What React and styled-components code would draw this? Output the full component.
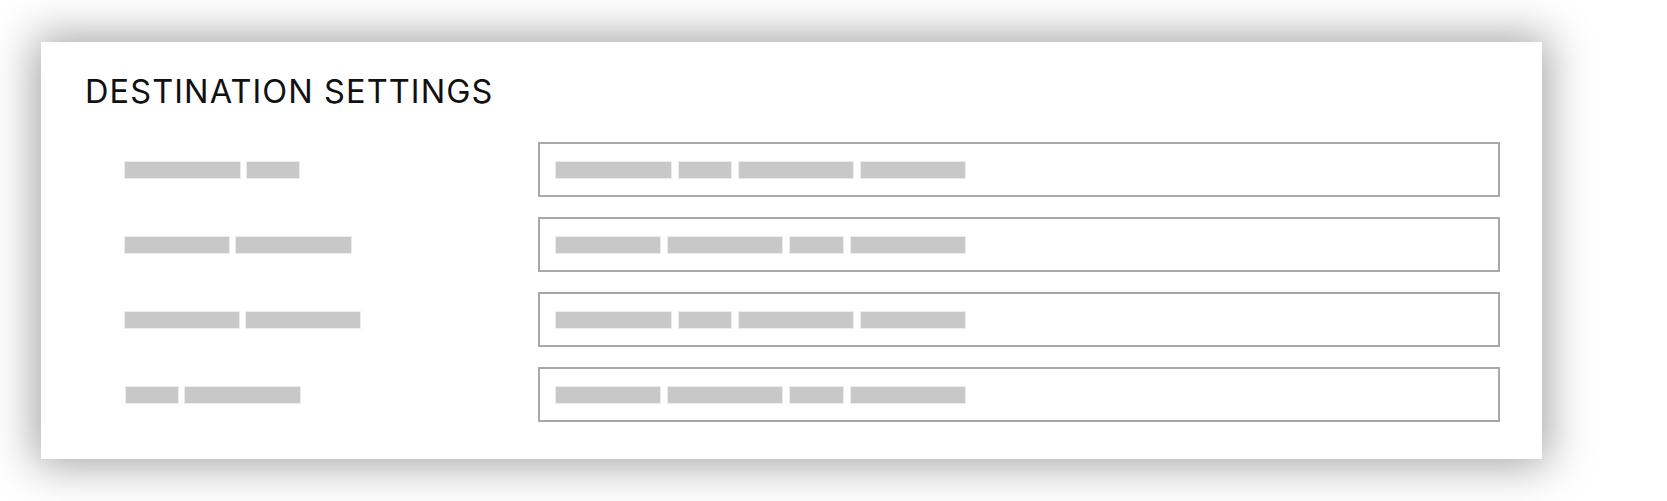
import React from 'react';
import styled, { createGlobalStyle } from 'styled-components';

const GlobalStyle = createGlobalStyle`
  html, body {
    margin: 0;
    padding: 0;
    background: #fff;
  }
  body {
    font-family: Inter, "Liberation Sans", sans-serif;
  }
`;

const Page = styled.div`
  display: flex;
  align-items: flex-start;
  padding: 42px 0 0 41px;
  height: 501px;
  box-sizing: border-box;
  overflow: hidden;
`;

const Card = styled.section`
  width: 1501px;
  box-sizing: border-box;
  padding: 34px 42px 37px 45px;
  background: #fff;
  box-shadow: 0 0 42px 6px rgba(0, 0, 0, 0.36);
`;

const Title = styled.h2`
  margin: 0 0 34px -1px;
  font-family: Inter, "Liberation Sans", sans-serif;
  font-size: 32.5px;
  line-height: 32px;
  font-weight: 400;
  letter-spacing: 1.1px;
  color: #111;
  text-transform: uppercase;
`;

const Rows = styled.div`
  display: flex;
  flex-direction: column;
  gap: 20px;
`;

const Row = styled.div`
  display: grid;
  grid-template-columns: 452px 962px;
  align-items: center;
`;

const Label = styled.div`
  display: flex;
  gap: 7px;
  padding-left: ${({ $indent }) => $indent || 39}px;
  padding-top: 1px;
`;

const Field = styled.div`
  display: flex;
  align-items: center;
  gap: 8px;
  height: 55px;
  box-sizing: border-box;
  padding: 0 16px;
  border: 2px solid #a8a8a8;
  background: #fff;
`;

const Bar = styled.span`
  display: block;
  width: ${({ $w }) => $w}px;
  height: 16px;
  background: #c8c8c8;
  box-shadow: 0 0 0 1px #ececec;
`;

const rowA = [115, 52, 114, 104];
const rowB = [104, 114, 53, 114];

const settings = [
  { label: [115, 52], value: rowA },
  { label: [104, 115], value: rowB },
  { label: [114, 114], value: rowA },
  { label: [52, 115], value: rowB, indent: 40 },
];

export default function App() {
  return (
    <>
      <GlobalStyle />
      <Page>
        <Card>
          <Title>Destination Settings</Title>
          <Rows>
            {settings.map((s, i) => (
              <Row key={i}>
                <Label $indent={s.indent}>
                  {s.label.map((w, j) => <Bar key={j} $w={w} />)}
                </Label>
                <Field>
                  {s.value.map((w, j) => <Bar key={j} $w={w} />)}
                </Field>
              </Row>
            ))}
          </Rows>
        </Card>
      </Page>
    </>
  );
}
